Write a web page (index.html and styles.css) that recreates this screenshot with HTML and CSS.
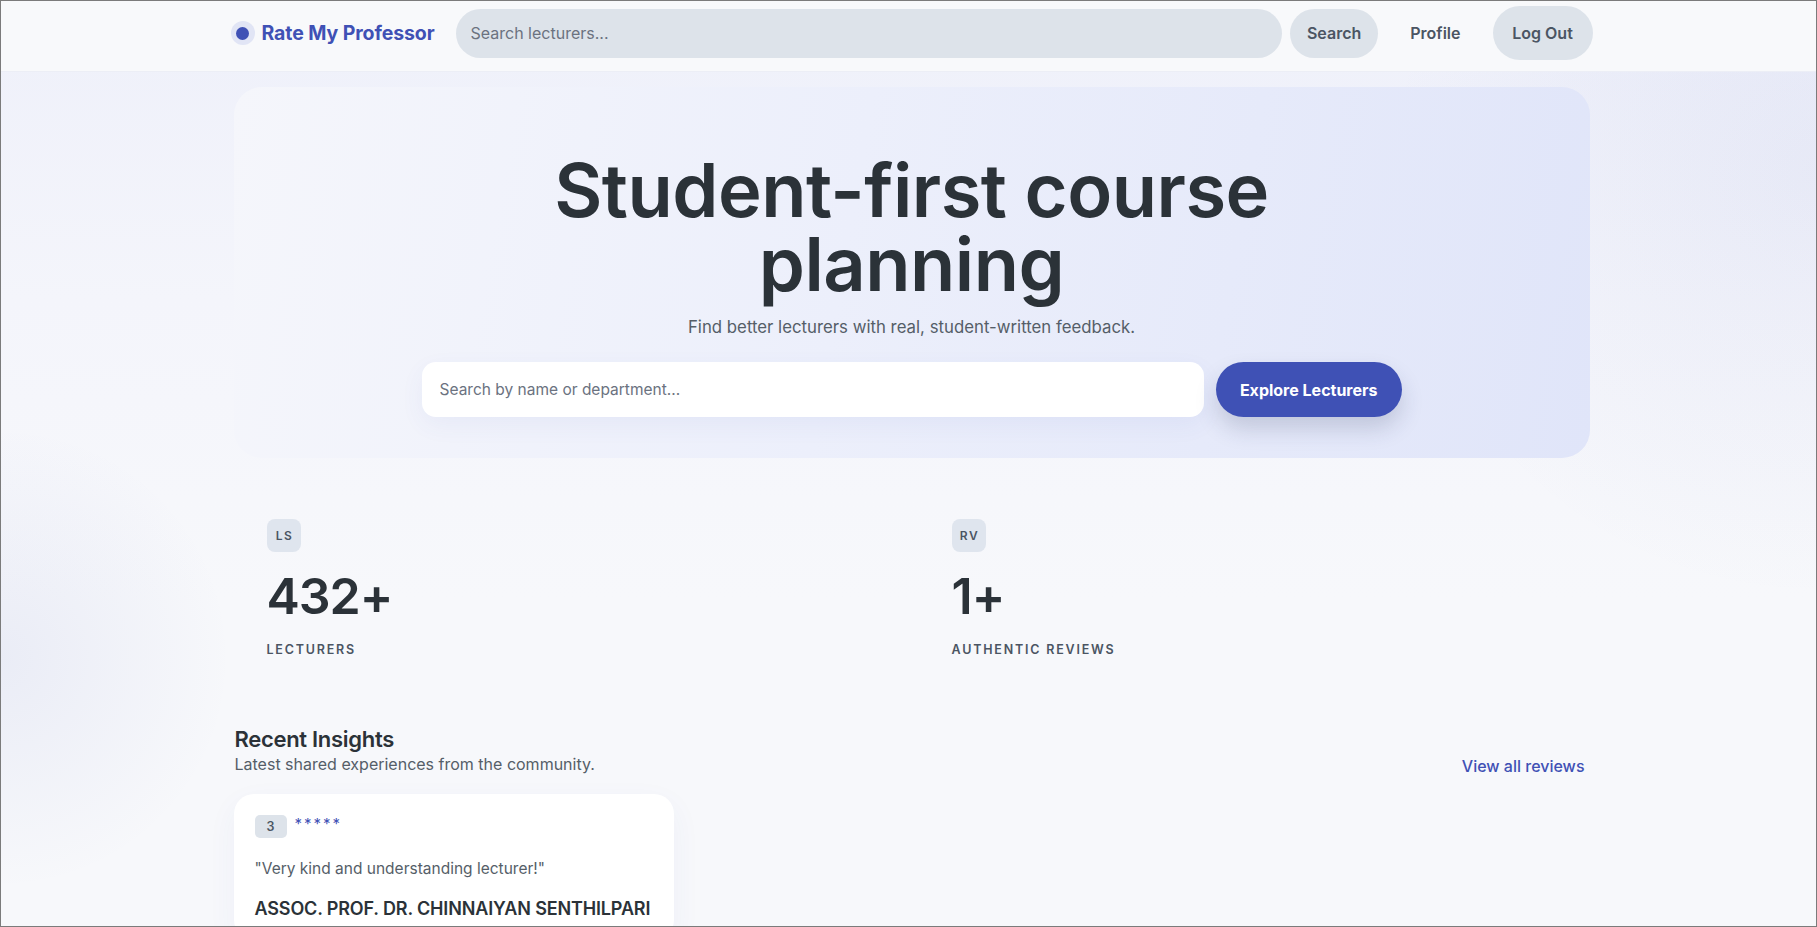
FILE: index.html
```html
<!DOCTYPE html>
<html lang="en">
<head>
  <meta charset="UTF-8">
  <title>Rate My Professor</title>
  <link rel="stylesheet" href="styles.css">
</head>
<body>
<header class="topbar">
  <div class="topbar-inner">
    <a class="brand" href="#"><span class="brand-mark"></span>Rate My Professor</a>
    <form class="nav-search">
      <input type="text" placeholder="Search lecturers...">
      <button type="button" class="pill">Search</button>
    </form>
    <a class="nav-link" href="#">Profile</a>
    <button type="button" class="pill pill-tall">Log Out</button>
  </div>
</header>

<main class="shell">
  <section class="hero">
    <h1>Student-first course planning</h1>
    <p class="hero-sub">Find better lecturers with real, student-written feedback.</p>
    <form class="hero-search">
      <input type="text" placeholder="Search by name or department...">
      <button type="button" class="explore-btn">Explore Lecturers</button>
    </form>
  </section>

  <section class="stats">
    <div class="stat">
      <span class="stat-tag">LS</span>
      <div class="stat-value">432+</div>
      <div class="stat-label">Lecturers</div>
    </div>
    <div class="stat">
      <span class="stat-tag">RV</span>
      <div class="stat-value">1+</div>
      <div class="stat-label">Authentic Reviews</div>
    </div>
  </section>

  <section class="insights">
    <div class="insights-head">
      <div>
        <h2>Recent Insights</h2>
        <p>Latest shared experiences from the community.</p>
      </div>
      <a class="view-all" href="#">View all reviews</a>
    </div>

    <div class="review-grid">
      <article class="review-card">
        <div class="review-top">
          <span class="score">3</span>
          <span class="stars">*****</span>
        </div>
        <p class="quote">"Very kind and understanding lecturer!"</p>
        <h3 class="lecturer">ASSOC. PROF. DR. CHINNAIYAN SENTHILPARI</h3>
      </article>
    </div>
  </section>
</main>
</body>
</html>
```

FILE: styles.css
```css
* {
  box-sizing: border-box;
}

body {
  margin: 0;
  padding-left: 6px;
  font-family: 'Inter', 'Noto Sans', sans-serif;
  color: #2b3238;
  background:
    radial-gradient(circle at 0% 70%, rgba(63, 81, 181, 0.07), transparent 12%),
    radial-gradient(circle at 100% 18%, rgba(63, 81, 181, 0.06), transparent 22%),
    linear-gradient(180deg, #eef0fa 0px, #f4f5fb 300px, #f7f8fb 600px);
  min-height: 100vh;
}

/* thin frame round the window */
body::after {
  content: '';
  position: fixed;
  inset: 0;
  border: 1px solid #7b7b7b;
  pointer-events: none;
}

a {
  text-decoration: none;
}

/* ---------- top bar ---------- */

.topbar {
  background: #f8f9fb;
  margin-left: -6px;
  padding-left: 6px;
  border-bottom: 1px solid #eceef6;
}

.topbar-inner {
  max-width: 1362px;
  margin: 0 auto;
  height: 71px;
  padding-bottom: 5px;
  display: flex;
  align-items: center;
}

.brand {
  display: flex;
  align-items: center;
  gap: 7px;
  font-size: 19.5px;
  font-weight: 700;
  letter-spacing: -0.1px;
  color: #3f51b5;
  white-space: nowrap;
}

.brand-mark {
  width: 24px;
  height: 24px;
  border-radius: 50%;
  background: #e1e5f5;
  display: flex;
  align-items: center;
  justify-content: center;
}

.brand-mark::before {
  content: '';
  width: 13px;
  height: 13px;
  border-radius: 50%;
  background: #3f51b5;
}

.nav-search {
  flex: 1;
  display: flex;
  gap: 8px;
  margin-left: 21px;
}

.nav-search input {
  flex: 1;
  height: 49px;
  border: none;
  border-radius: 25px;
  background: #dde3ea;
  padding: 0 15px;
  font-family: inherit;
  font-size: 16px;
  color: #2b3238;
  outline: none;
}

.nav-search input::placeholder {
  color: #6b7280;
}

.pill {
  height: 49px;
  padding: 0 17px;
  border: none;
  border-radius: 25px;
  background: #dde3ea;
  font-family: inherit;
  font-size: 16px;
  font-weight: 600;
  color: #4b5563;
  cursor: pointer;
}

.pill-tall {
  height: 54px;
  width: 100px;
  padding: 0;
  border-radius: 27px;
}

.nav-link {
  margin: 0 16px;
  padding: 0 16px;
  font-size: 16px;
  font-weight: 600;
  color: #4b5563;
}

/* ---------- page body ---------- */

.shell {
  max-width: 1356px;
  margin: 0 auto;
  padding-top: 15px;
}

.hero {
  background: linear-gradient(100deg, #f5f6fb 0%, #eceffb 45%, #e0e5f9 100%);
  border-radius: 28px;
  padding: 66px 0 41px;
  text-align: center;
}

.hero h1 {
  max-width: 800px;
  margin: 0 auto;
  font-size: 74px;
  line-height: 1;
  font-weight: 600;
  letter-spacing: -0.5px;
  color: #2b3238;
}

.hero-sub {
  margin: 14px 0 22px;
  font-size: 16.8px;
  line-height: 1.5;
  color: #555e68;
}

.hero-search {
  display: flex;
  gap: 12px;
  max-width: 980px;
  margin: 0 auto;
}

.hero-search input {
  flex: 1;
  height: 55px;
  border: none;
  border-radius: 14px;
  background: #fff;
  padding: 0 18px;
  font-family: inherit;
  font-size: 15.5px;
  outline: none;
  box-shadow: 0 8px 24px rgba(63, 81, 181, 0.06);
}

.hero-search input::placeholder {
  color: #6b7280;
}

.explore-btn {
  height: 55px;
  padding: 0 24px;
  border: none;
  border-radius: 28px;
  background: #3f51b5;
  color: #fff;
  font-family: inherit;
  font-size: 16px;
  font-weight: 700;
  cursor: pointer;
  box-shadow: 0 12px 22px rgba(40, 50, 90, 0.18);
}

/* ---------- stats ---------- */

.stats {
  display: grid;
  grid-template-columns: 1fr 1fr;
  column-gap: 84px;
  padding: 61px 37px 0 33px;
}

.stat-tag {
  display: inline-flex;
  align-items: center;
  justify-content: center;
  width: 34px;
  height: 33px;
  border-radius: 8px;
  background: #dfe5ee;
  font-size: 12px;
  font-weight: 600;
  letter-spacing: 1.5px;
  padding-left: 2px;
  color: #4b5563;
}

.stat-value {
  margin-top: 17px;
  font-size: 50px;
  line-height: 1.1;
  font-weight: 600;
  letter-spacing: -1px;
  color: #2b3238;
}

.stat-label {
  margin-top: 17px;
  font-size: 12.5px;
  line-height: 1.4;
  font-weight: 600;
  letter-spacing: 1.8px;
  text-transform: uppercase;
  color: #4b5563;
}

/* ---------- recent insights ---------- */

.insights {
  padding-top: 66px;
}

.insights-head {
  display: flex;
  justify-content: space-between;
  align-items: flex-end;
  padding: 0 5px 0 1px;
}

.insights-head h2 {
  margin: 0;
  font-size: 22px;
  line-height: 1.3;
  font-weight: 600;
  letter-spacing: -0.3px;
  color: #2b3238;
}

.insights-head p {
  margin: 0;
  font-size: 16px;
  line-height: 1.4;
  color: #555e68;
}

.view-all {
  font-size: 16px;
  font-weight: 500;
  line-height: 1.4;
  color: #3f51b5;
  margin-bottom: -2px;
}

.review-grid {
  display: grid;
  grid-template-columns: repeat(3, 1fr);
  gap: 18px;
  margin-top: 18px;
}

.review-card {
  background: #fff;
  border-radius: 20px;
  padding: 21px;
  box-shadow: 0 10px 30px rgba(63, 81, 181, 0.05);
}

.review-top {
  display: flex;
  align-items: center;
  gap: 8px;
}

.score {
  width: 32px;
  height: 23px;
  border-radius: 5px;
  background: #dde3ea;
  display: flex;
  align-items: center;
  justify-content: center;
  font-size: 12.5px;
  font-weight: 600;
  color: #4b5563;
}

.stars {
  font-size: 15px;
  letter-spacing: 2px;
  color: #3f51b5;
  margin-top: -6px;
}

.quote {
  margin: 19px 0 0;
  font-size: 15.5px;
  line-height: 1.5;
  color: #555e68;
}

.lecturer {
  margin: 18px 0 0;
  font-size: 18px;
  font-weight: 600;
  letter-spacing: -0.15px;
  white-space: nowrap;
  color: #2b3238;
}
```
